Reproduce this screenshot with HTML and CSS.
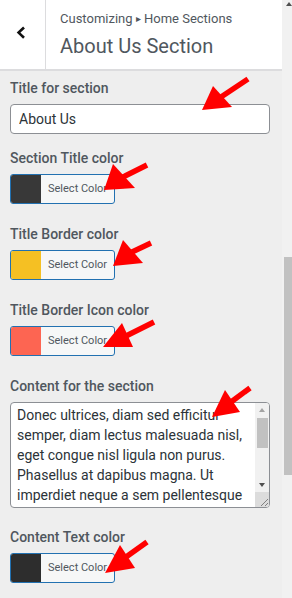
FILE: index.html
```html
<!DOCTYPE html>
<html lang="en">
<head>
<meta charset="utf-8">
<title>About Us Section</title>
<link rel="stylesheet" href="styles.css">
</head>
<body>
<div class="app">
  <div class="panel">
    <header class="sec-head">
      <button class="back" aria-label="Back">
        <svg width="45" height="69" viewBox="0 0 45 69"><polyline points="24,27.5 18.6,32.6 24,37.7" fill="none" stroke="#111" stroke-width="2.6"/></svg>
      </button>
      <div class="titles">
        <div class="crumb">Customizing <span class="tri">&#9656;</span> Home Sections</div>
        <h3 class="sec-title">About Us Section</h3>
      </div>
    </header>
    <main class="controls">
      <div class="control">
        <label class="ctl-label">Title for section</label>
        <input class="text-input" type="text" value="About Us">
      </div>
      <div class="control gap-sm">
        <label class="ctl-label">Section Title color</label>
        <button class="color-btn"><span class="swatch sw-dark"></span><span class="btn-text">Select Color</span></button>
      </div>
      <div class="control">
        <label class="ctl-label">Title Border color</label>
        <button class="color-btn"><span class="swatch sw-yellow"></span><span class="btn-text">Select Color</span></button>
      </div>
      <div class="control">
        <label class="ctl-label">Title Border Icon color</label>
        <button class="color-btn"><span class="swatch sw-red"></span><span class="btn-text">Select Color</span></button>
      </div>
      <div class="control">
        <label class="ctl-label">Content for the section</label>
        <div class="ta">
          <textarea class="ta-text">Donec ultrices, diam sed efficitur semper, diam lectus malesuada nisl, eget congue nisl ligula non purus. Phasellus at dapibus magna. Ut imperdiet neque a sem pellentesque tincidunt. Sed sagittis lorem id velit facilisis.</textarea>
          <div class="ta-bar">
            <span class="ta-btn"><span class="tri-up"></span></span>
            <span class="ta-track"><span class="ta-thumb"></span></span>
            <span class="ta-btn"><span class="tri-down"></span></span>
            <span class="ta-corner">
              <svg width="14" height="15" viewBox="0 0 14 15"><line x1="6" y1="14" x2="13" y2="7" stroke="#808080" stroke-width="1"/><line x1="10" y1="14" x2="13" y2="11" stroke="#808080" stroke-width="1"/></svg>
            </span>
          </div>
        </div>
      </div>
      <div class="control gap-last">
        <label class="ctl-label">Content Text color</label>
        <button class="color-btn"><span class="swatch sw-black"></span><span class="btn-text">Select Color</span></button>
      </div>
    </main>
  </div>
  <div class="scrollbar">
    <span class="sb-up"></span>
    <span class="sb-thumb"></span>
  </div>
  <svg class="annotations" width="292" height="598" viewBox="0 0 292 598" aria-hidden="true">
    <g fill="#ff0000" stroke="#ff0000">
      <polygon points="202,110 213,86 232,107" stroke="none"/>
      <line x1="221" y1="97" x2="248" y2="79" stroke-width="5.5"/>
      <polygon points="104,190 113,164 135,188" stroke="none"/>
      <line x1="123" y1="177" x2="147" y2="165" stroke-width="5.5"/>
      <polygon points="113,266 123,240 143,263" stroke="none"/>
      <line x1="132" y1="252" x2="151" y2="243" stroke-width="5.5"/>
      <polygon points="103,347 122,323 133,347" stroke="none"/>
      <line x1="126" y1="336" x2="154" y2="322" stroke-width="5.5"/>
      <polygon points="212,417 225,390 240,412" stroke="none"/>
      <line x1="231" y1="402" x2="250" y2="388" stroke-width="5.5"/>
      <polygon points="105,573 120,545 135,568" stroke="none"/>
      <line x1="126" y1="557" x2="147" y2="542" stroke-width="5.5"/>
    </g>
  </svg>
</div>
</body>
</html>
```

FILE: styles.css
```css
* { box-sizing: border-box; }

html, body {
  margin: 0;
  padding: 0;
  width: 292px;
  height: 598px;
  overflow: hidden;
  background: #eeeeee;
  font-family: Roboto, "Liberation Sans", sans-serif;
}

.app {
  position: relative;
  display: flex;
  width: 292px;
  height: 598px;
  overflow: hidden;
}

.panel {
  flex: 1;
  background: #eeeeee;
}

/* header */
.sec-head {
  display: flex;
  height: 71px;
  background: #ffffff;
  border-bottom: 2px solid #dcdcde;
}

.back {
  flex: none;
  width: 46px;
  height: 69px;
  padding: 0;
  margin: 0;
  border: 0;
  border-right: 1px solid #dcdcde;
  background: #ffffff;
  display: block;
}

.back svg { display: block; }

.titles {
  padding: 10px 0 0 14px;
  color: #50575e;
}

.crumb {
  font-size: 13px;
  line-height: 18px;
}

.tri {
  font-size: 10px;
  position: relative;
  top: -1px;
}

.sec-title {
  margin: 4px 0 0;
  font-size: 20px;
  font-weight: 400;
  line-height: 26px;
}

/* controls */
.controls {
  padding: 7px 12px 0 10px;
}

.control + .control { margin-top: 20px; }
.control.gap-sm { margin-top: 14px; }
.control.gap-last { margin-top: 19px; }

.ctl-label {
  display: block;
  font-size: 14px;
  font-weight: 500;
  line-height: 20px;
  color: #50575e;
  margin-bottom: 6px;
}

.text-input {
  display: block;
  width: 260px;
  height: 30px;
  margin: 0;
  padding: 0 8px;
  border: 1px solid #8c8f94;
  border-radius: 4px;
  background: #ffffff;
  font-family: Roboto, "Liberation Sans", sans-serif;
  font-size: 14px;
  color: #2c3338;
}

.color-btn {
  display: flex;
  width: max-content;
  align-items: stretch;
  height: 30px;
  margin: 0;
  padding: 0;
  border: 1px solid #2271b1;
  border-radius: 3px;
  background: #f6f7f7;
  overflow: hidden;
  font-family: Roboto, "Liberation Sans", sans-serif;
  font-size: 11px;
  color: #50575e;
}

.swatch { width: 30px; flex: none; }
.sw-dark { background: #383838; }
.sw-yellow { background: #f5c023; }
.sw-red { background: #fd6552; }
.sw-black { background: #2d2d2d; }

.btn-text {
  padding: 0 7px;
  line-height: 28px;
}

/* textarea */
.ta {
  display: flex;
  width: 260px;
  height: 106px;
  border: 1px solid #8c8f94;
  border-radius: 4px;
  background: #ffffff;
  overflow: hidden;
}

.ta-text {
  flex: 1;
  min-width: 0;
  margin: 0;
  padding: 2px 4px 0 6px;
  border: 0;
  outline: none;
  resize: none;
  overflow: hidden;
  background: transparent;
  font-family: Roboto, "Liberation Sans", sans-serif;
  font-size: 14px;
  line-height: 20px;
  color: #2c3338;
}

.ta-bar {
  flex: none;
  width: 14px;
  display: flex;
  flex-direction: column;
  background: #f1f1f1;
}

.ta-btn {
  height: 14px;
  display: flex;
  align-items: center;
  justify-content: center;
}

.tri-up {
  width: 0;
  height: 0;
  border-left: 3.5px solid transparent;
  border-right: 3.5px solid transparent;
  border-bottom: 4px solid #a3a3a3;
}

.tri-down {
  width: 0;
  height: 0;
  border-left: 3.5px solid transparent;
  border-right: 3.5px solid transparent;
  border-top: 4px solid #505050;
}

.ta-track {
  flex: 1;
  display: flex;
  flex-direction: column;
}

.ta-thumb {
  height: 30px;
  margin: 1px 1px 0 2px;
  background: #c1c1c1;
}

.ta-corner {
  height: 15px;
  background: #dcdcdc;
}

.ta-corner svg { display: block; }

/* page scrollbar */
.scrollbar {
  flex: none;
  width: 10px;
  background: #f1f1f1;
  display: flex;
  flex-direction: column;
}

.sb-up {
  width: 0;
  height: 0;
  margin: 2px 0 0 4px;
  border-left: 3px solid transparent;
  border-right: 3px solid transparent;
  border-bottom: 4px solid #505050;
}

.sb-thumb {
  width: 8px;
  height: 218px;
  margin: 251px 0 0 2px;
  background: #c1c1c1;
}

.annotations {
  position: absolute;
  left: 0;
  top: 0;
  pointer-events: none;
}
```
